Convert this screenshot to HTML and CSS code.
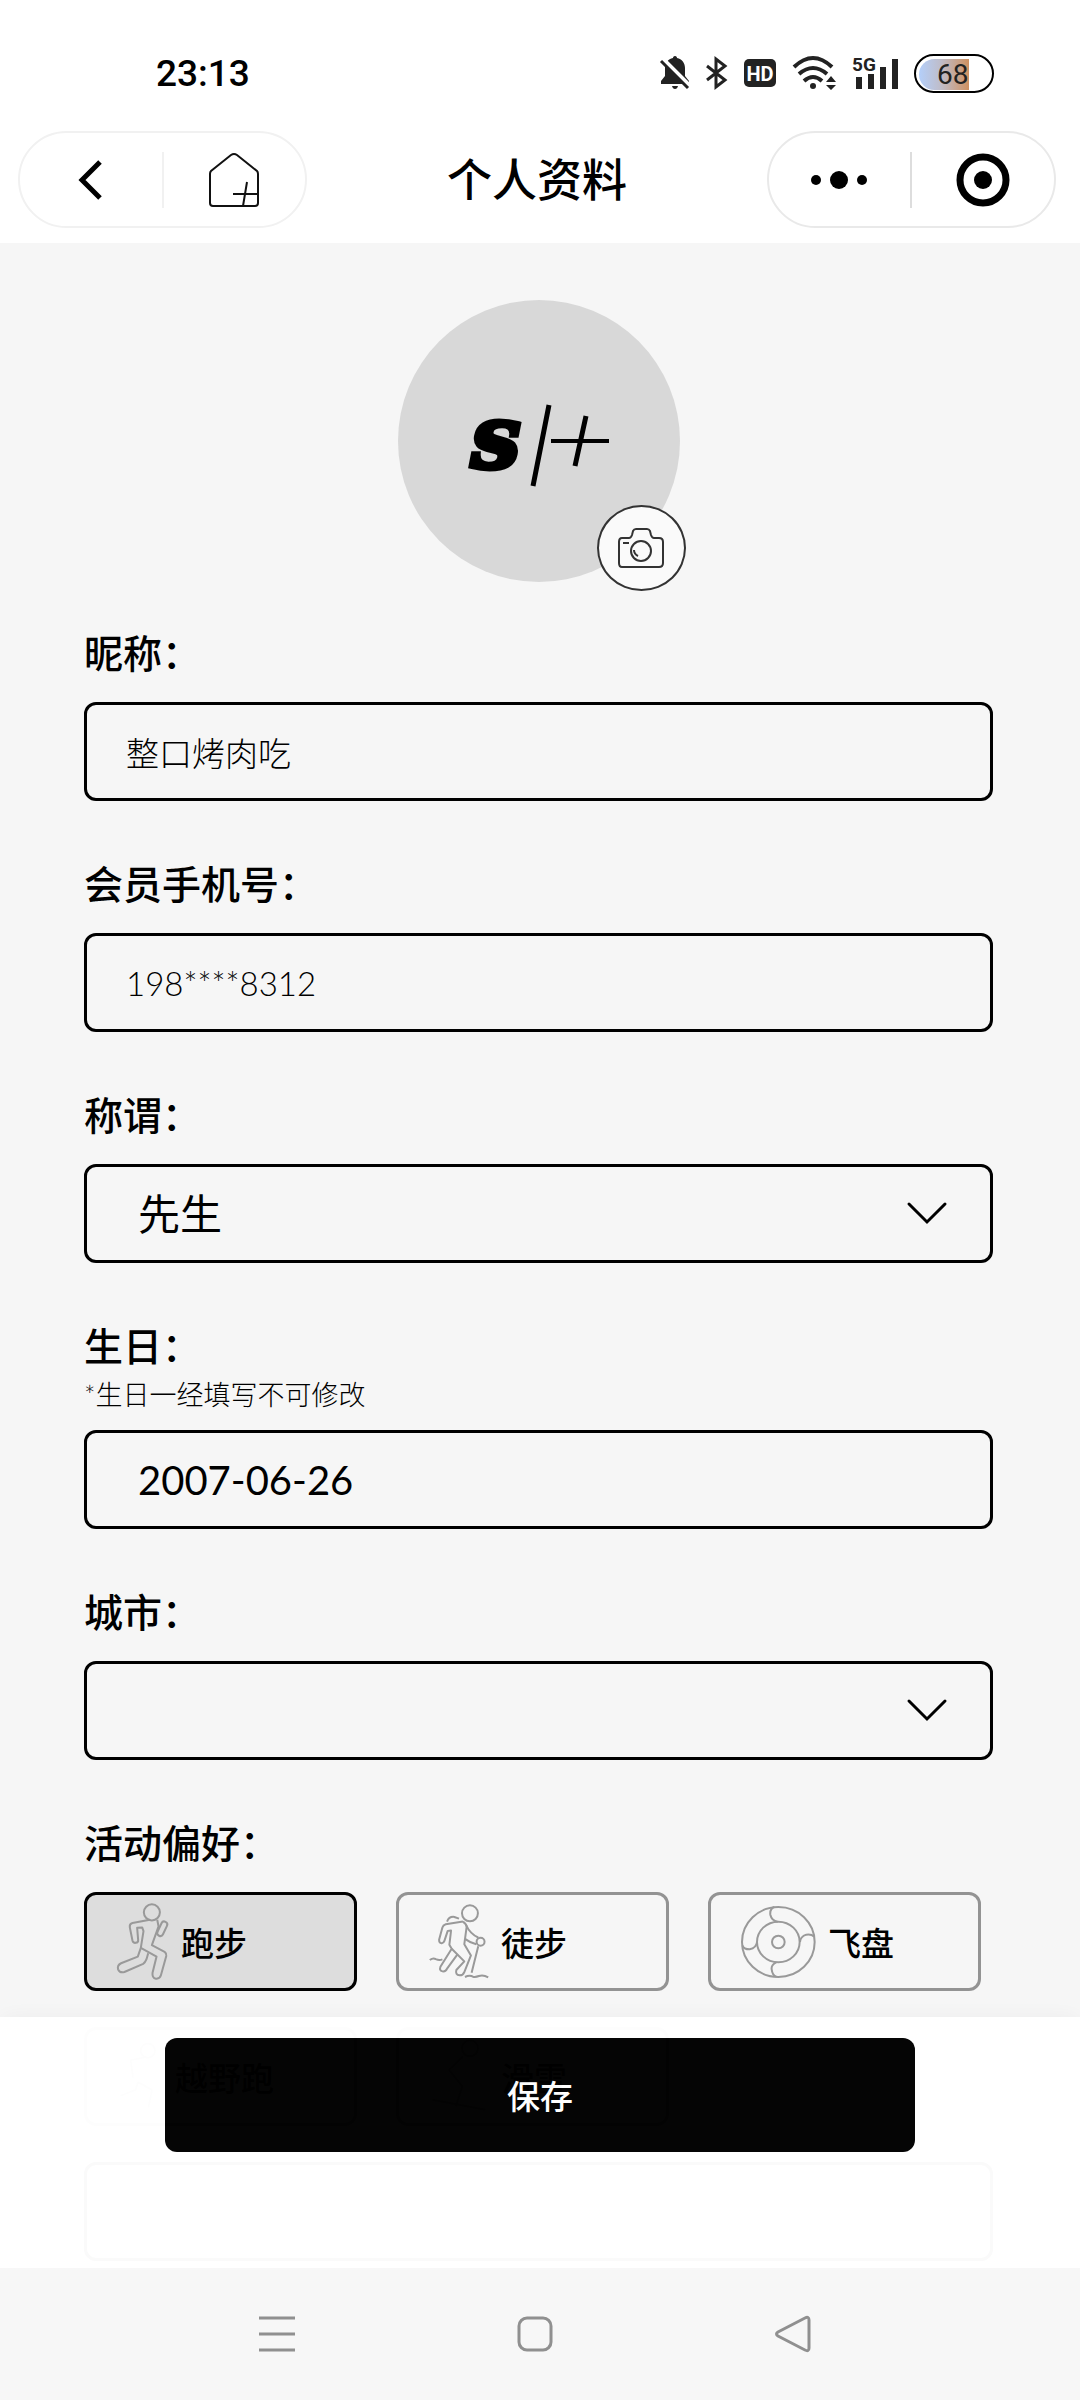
FILE: index.html
```html
<!DOCTYPE html>
<html lang="zh-CN">
<head>
    <meta charset="utf-8">
    <meta name="viewport" content="width=device-width, initial-scale=1">
    <title>个人资料</title>
    <link rel="stylesheet" href="styles.css">
</head>
<body>
    <header class="top">
        <div class="status-bar">
            <span class="time">23:13</span>
            <div class="status-icons">
                <svg width="30" height="34" viewBox="0 0 30 34">
                    <path d="M15 0c1.500 0 2 1 2 2 5 1 8 5 8 10v8l4 5v3H1v-3l4-5v-8c0-5 3-9 8-10 0-1 .5-2 2-2zM12 30h6c-.5 2-1.500 3-3 3s-2.500-1-3-3z" fill="#222"/>
                    <path d="M3 3l27 27" stroke="#fff" stroke-width="4"/>
                    <path d="M1 5l27 27" stroke="#222" stroke-width="3"/>
                </svg>
                <svg width="22" height="34" viewBox="0 0 22 34" fill="none" stroke="#222" stroke-width="3">
                    <path d="M1 10l18 14-9 7V3l9 7L1 24"/>
                </svg>
                <svg width="32" height="30" viewBox="0 0 32 30">
                    <rect y="1" width="32" height="28" rx="5" fill="#222"/>
                    <text class="icon-text" x="16" y="23" text-anchor="middle" font-size="20" fill="#fff">HD</text>
                </svg>
                <svg width="44" height="34" viewBox="0 0 44 34">
                    <g fill="none" stroke="#222" stroke-width="4">
                        <path d="M2 11q19-18 38 0"/>
                        <path d="M7 18q14-12 28 0"/>
                        <path d="M12 25q9-8 18 0"/>
                    </g>
                    <circle cx="21" cy="30" r="3" fill="#222"/>
                    <path d="M34 26l5-6 5 6zM34 29h10l-5 5z" fill="#222"/>
                </svg>
                <svg width="46" height="34" viewBox="0 0 46 34">
                    <text class="icon-text" x="0" y="15" font-size="19" fill="#222">5G</text>
                    <path d="M7 21v12M19 18v15M31 11v22M43 3v30" stroke="#222" stroke-width="6"/>
                </svg>
                <div class="battery"><span>68</span></div>
            </div>
        </div>
        <nav class="title-bar">
            <div class="capsule capsule-left">
                <button type="button" aria-label="返回">
                    <svg width="24" height="40" viewBox="0 0 24 40" fill="none" stroke="#000" stroke-width="5">
                        <path d="M21 2L3 20l18 18"/>
                    </svg>
                </button>
                <button type="button" aria-label="首页">
                    <svg width="52" height="58" viewBox="0 0 52 58" fill="none" stroke="#111" stroke-width="2">
                        <path d="M23 4q3-2 6 0l20 16q1 1 1 3v29q0 3-3 3H5q-3 0-3-3V23q0-2 1-3z"/>
                        <path d="M25 43h25M39 31l-4 24"/>
                    </svg>
                </button>
            </div>
            <h1>个人资料</h1>
            <div class="capsule capsule-right">
                <button type="button" aria-label="更多">
                    <svg width="58" height="20" viewBox="0 0 58 20">
                        <circle cx="5" cy="10" r="5"/>
                        <circle cx="28" cy="10" r="9"/>
                        <circle cx="51" cy="10" r="5"/>
                    </svg>
                </button>
                <button type="button" aria-label="关闭">
                    <svg width="54" height="54" viewBox="0 0 54 54">
                        <circle cx="27" cy="27" r="23" fill="none" stroke="#000" stroke-width="7"/>
                        <circle cx="27" cy="27" r="9"/>
                    </svg>
                </button>
            </div>
        </nav>
    </header>

    <main>
        <div class="avatar">
            <svg width="142" height="84" viewBox="0 0 142 84">
                <text class="logo-s" x="3" y="64" font-size="88" stroke="#000" stroke-width="5">s</text>
                <path d="M81 1L65 82M118 12l-11 50" stroke="#000" stroke-width="5"/>
                <path d="M83 37h58" stroke="#000" stroke-width="4"/>
            </svg>
            <button type="button" class="camera" aria-label="更换头像">
                <svg width="46" height="40" viewBox="0 0 46 40" fill="none" stroke="#333" stroke-width="2">
                    <path d="M4 10h7q2 0 3-3l1-4q1-2 3-2h11q2 0 3 2l1 4q1 3 3 3h5q4 0 4 4v21q0 4-4 4H4q-3 0-3-4V14q0-4 3-4z"/>
                    <circle cx="23" cy="23" r="10"/>
                    <path d="M5 15h6M16 22q0 4 4 6"/>
                </svg>
            </button>
        </div>

        <form id="profileForm">
            <div class="field">
                <label for="nickname">昵称：</label>
                <input type="text" id="nickname" name="nickname" value="整口烤肉吃">
            </div>
            <div class="field">
                <label for="phone">会员手机号：</label>
                <input type="text" id="phone" name="phone" value="198****8312" readonly>
            </div>
            <div class="field">
                <label for="gender">称谓：</label>
                <div class="select-wrap">
                    <select id="gender" name="gender">
                        <option>先生</option>
                        <option>女士</option>
                    </select>
                    <svg width="40" height="24" viewBox="0 0 40 24"><path d="M2 2l18 18L38 2"/></svg>
                </div>
            </div>
            <div class="field">
                <label for="birthday" class="has-hint">生日：</label>
                <p class="hint">*生日一经填写不可修改</p>
                <input type="text" id="birthday" name="birthday" class="large" value="2007-06-26" readonly>
            </div>
            <div class="field">
                <label for="city">城市：</label>
                <div class="select-wrap">
                    <select id="city" name="city">
                        <option></option>
                    </select>
                    <svg width="40" height="24" viewBox="0 0 40 24"><path d="M2 2l18 18L38 2"/></svg>
                </div>
            </div>
            <fieldset class="field">
                <legend>活动偏好：</legend>
                <div class="chips">
                    <label class="chip">
                        <input type="checkbox" name="sport" value="run" checked>
                        <svg width="52" height="77" viewBox="0 0 155 230">
                            <circle cx="104" cy="28" r="24"/>
                            <path d="M98 50L46 60q-9 2-8 12l8 40q2 8 10 7t7-9l-3-36 15-1 4 11-8 50-9 26-50 20q-12 6-9 18 5 12 19 8l56-24q6-4 10-14l5-18"/>
                            <path d="M71 134l47 26-12 48q-2 16 10 18 12 1 15-10l16-58q1-8-5-12l-38-20 20-56-4-20"/>
                            <rect x="126" y="54" width="18" height="46" rx="9" transform="rotate(25 135 77)"/>
                        </svg>
                        跑步
                    </label>
                    <label class="chip">
                        <input type="checkbox" name="sport" value="hike">
                        <svg width="60" height="73" viewBox="0 0 180 220">
                            <circle cx="123" cy="25" r="24"/>
                            <path d="M54 50q6-16 22-14l14 5"/>
                            <path d="M102 50l-52 8q-8 2-10 10l-10 37q0 11 8 10 6-1 8-7l10-30 10-1-5 43 7 12-34 54q-4 12 6 14t14-8l32-44"/>
                            <path d="M68 132l38 38-24 26q-4 14 10 16 10 0 14-10l20-50-20-34 7-52q0-8-11-16"/>
                            <path d="M111 60q13 28 37 38M108 102q16 12 34 16M148 124l-20 80"/>
                            <circle cx="155" cy="111" r="12"/>
                            <path d="M2 166q10-8 18-3 10 5 20 1M108 217q14-7 24-1 8 2 18-2 14-4 28 4"/>
                        </svg>
                        徒步
                    </label>
                    <label class="chip">
                        <input type="checkbox" name="sport" value="disc">
                        <svg width="75" height="72" viewBox="0 0 225 216">
                            <ellipse cx="112" cy="108" rx="109" ry="105"/>
                            <ellipse cx="112" cy="108" rx="64" ry="61"/>
                            <circle cx="112" cy="108" r="19"/>
                            <path d="M100 3q-14 5-12 23 4 18 22 21M219 92q-7-8-23-6-18 6-19 22M106 169q-16 7-14 21 2 18 14 22M4 118q4 12 22 12 20-4 22-22"/>
                        </svg>
                        飞盘
                    </label>
                    <label class="chip">
                        <input type="checkbox" name="sport" value="trail">
                        <svg width="46" height="77" viewBox="0 0 155 230">
                            <circle cx="104" cy="28" r="24"/>
                            <path d="M98 50L46 60l8 59M71 134l-9 26-50 20M71 134l47 26-12 60"/>
                        </svg>
                        越野跑
                    </label>
                    <label class="chip">
                        <input type="checkbox" name="sport" value="ski">
                        <svg width="60" height="73" viewBox="0 0 180 220">
                            <circle cx="123" cy="25" r="24"/>
                            <path d="M102 50L60 90l40 50-20 60M10 180l160 30"/>
                        </svg>
                        滑雪
                    </label>
                </div>
                <input type="text" name="other" aria-label="其他偏好">
            </fieldset>
        </form>
    </main>

    <div class="bottom">
        <div class="save-bar">
            <button type="submit" form="profileForm">保存</button>
        </div>
        <nav class="system-nav">
            <button type="button" aria-label="菜单">
                <svg width="36" height="36" viewBox="0 0 36 36"><path d="M0 2h36M0 18h36M0 34h36"/></svg>
            </button>
            <button type="button" aria-label="主屏幕">
                <svg width="36" height="36" viewBox="0 0 36 36"><rect x="2" y="2" width="32" height="32" rx="8"/></svg>
            </button>
            <button type="button" aria-label="后退">
                <svg width="36" height="36" viewBox="0 0 36 36"><path d="M30 2Q34 0 34 4v28q0 4-4 2L3 20q-3-2 0-4z"/></svg>
            </button>
        </nav>
    </div>
</body>
</html>
```
FILE: styles.css
```css
* { box-sizing: border-box; }
body { margin: 0; background: #f6f6f6; color: #000; font-family: Lato, "Noto Sans CJK SC", sans-serif; }
button { padding: 0; border: none; background: none; color: inherit; font: inherit; cursor: pointer; }
svg { display: block; flex: none; overflow: visible; }

.top { background: #fff; padding: 52px 24px 15px 18px; }
.status-bar { display: flex; justify-content: space-between; align-items: center; height: 42px; padding: 0 62px 0 138px; }
.time { font-family: Roboto, sans-serif; font-size: 37px; font-weight: 500; }
.status-icons { display: flex; align-items: center; gap: 16px; }
.icon-text { font-family: Roboto, sans-serif; font-weight: 700; }
.battery { width: 80px; height: 39px; padding: 3px; border: 2px solid #000; border-radius: 20px; overflow: hidden; }
.battery span { display: block; width: 50px; height: 31px; padding-left: 18px; border-radius: 16px 0 0 16px; background: linear-gradient(90deg, #b4cffa, #bfbcc8 45%, #cf9160); color: #222; font-family: Roboto, sans-serif; font-size: 28px; line-height: 31px; }

.title-bar { display: flex; justify-content: space-between; align-items: center; margin-top: 37px; }
.title-bar h1 { margin: 0; font-size: 45px; font-weight: 500; line-height: 60px; }
.capsule { display: flex; align-items: center; width: 289px; height: 97px; border: 2px solid #e9e9e9; border-radius: 49px; }
.capsule button { flex: 1; display: flex; justify-content: center; align-items: center; height: 56px; }
.capsule button + button { border-left: 2px solid #ddd; }
.capsule-left { border-color: #f1f1f1; }
.capsule-left button + button { border-color: #f1f1f1; }

main { padding: 57px 87px 140px 84px; }
.avatar { position: relative; display: flex; justify-content: center; align-items: center; width: 282px; height: 282px; margin: 0 auto 43px; padding-top: 10px; border-radius: 50%; background: #d8d8d8; }
.logo-s { font-family: "DejaVu Serif", serif; font-weight: 700; font-style: italic; }
.camera { position: absolute; right: -6px; bottom: -9px; display: flex; justify-content: center; align-items: center; width: 89px; height: 86px; border: 2px solid #333; border-radius: 50%; background: #fafafa; }

.field { margin: 0 0 55px; padding: 0; border: none; }
.field > label, legend { display: block; margin-bottom: 21px; padding: 0; font-size: 39px; font-weight: 500; line-height: 56px; }
.field > .has-hint { margin-bottom: 0; }
.hint { margin: 0 0 14px; font-size: 27px; font-weight: 300; line-height: 42px; }
.field > input, select { display: block; width: 100%; height: 99px; padding: 0 39px; border: 3px solid #000; border-radius: 12px; background: transparent; color: #000; font-family: inherit; font-size: 33px; font-weight: 300; }
.field > .large, select { padding-left: 51px; font-size: 42px; font-weight: 400; }
.field > .large { font-size: 40px; }
select { appearance: none; }
.select-wrap { position: relative; }
.select-wrap svg { position: absolute; right: 46px; top: 38px; pointer-events: none; fill: none; stroke: #000; stroke-width: 3; stroke-linecap: round; }

.chips { display: grid; grid-template-columns: repeat(3, 1fr); gap: 36px 39px; margin: 0 12px 36px 0; }
.chip { position: relative; display: flex; align-items: center; gap: 12px; height: 99px; padding-left: 30px; border: 3px solid #939393; border-radius: 12px; font-size: 33px; font-weight: 500; }
.chip:has(input:checked) { border-color: #000; background: #ddd; }
.chip input { position: absolute; opacity: 0; }
.chip svg { fill: none; stroke: #999; stroke-width: 6; stroke-linejoin: round; }

.bottom { position: fixed; left: 0; right: 0; bottom: 0; }
.save-bar { padding: 21px 165px 116px; background: #fff; box-shadow: 0 0 24px rgba(0, 0, 0, 0.05); opacity: 0.98; }
.save-bar button { display: block; width: 100%; height: 114px; border-radius: 12px; background: #000; color: #fff; font-size: 33px; font-weight: 500; }
.system-nav { position: relative; display: flex; justify-content: center; align-items: center; gap: 222px; height: 132px; padding-right: 10px; background: #f7f7f7; }
.system-nav svg { fill: none; stroke: #909090; stroke-width: 3; }
```
